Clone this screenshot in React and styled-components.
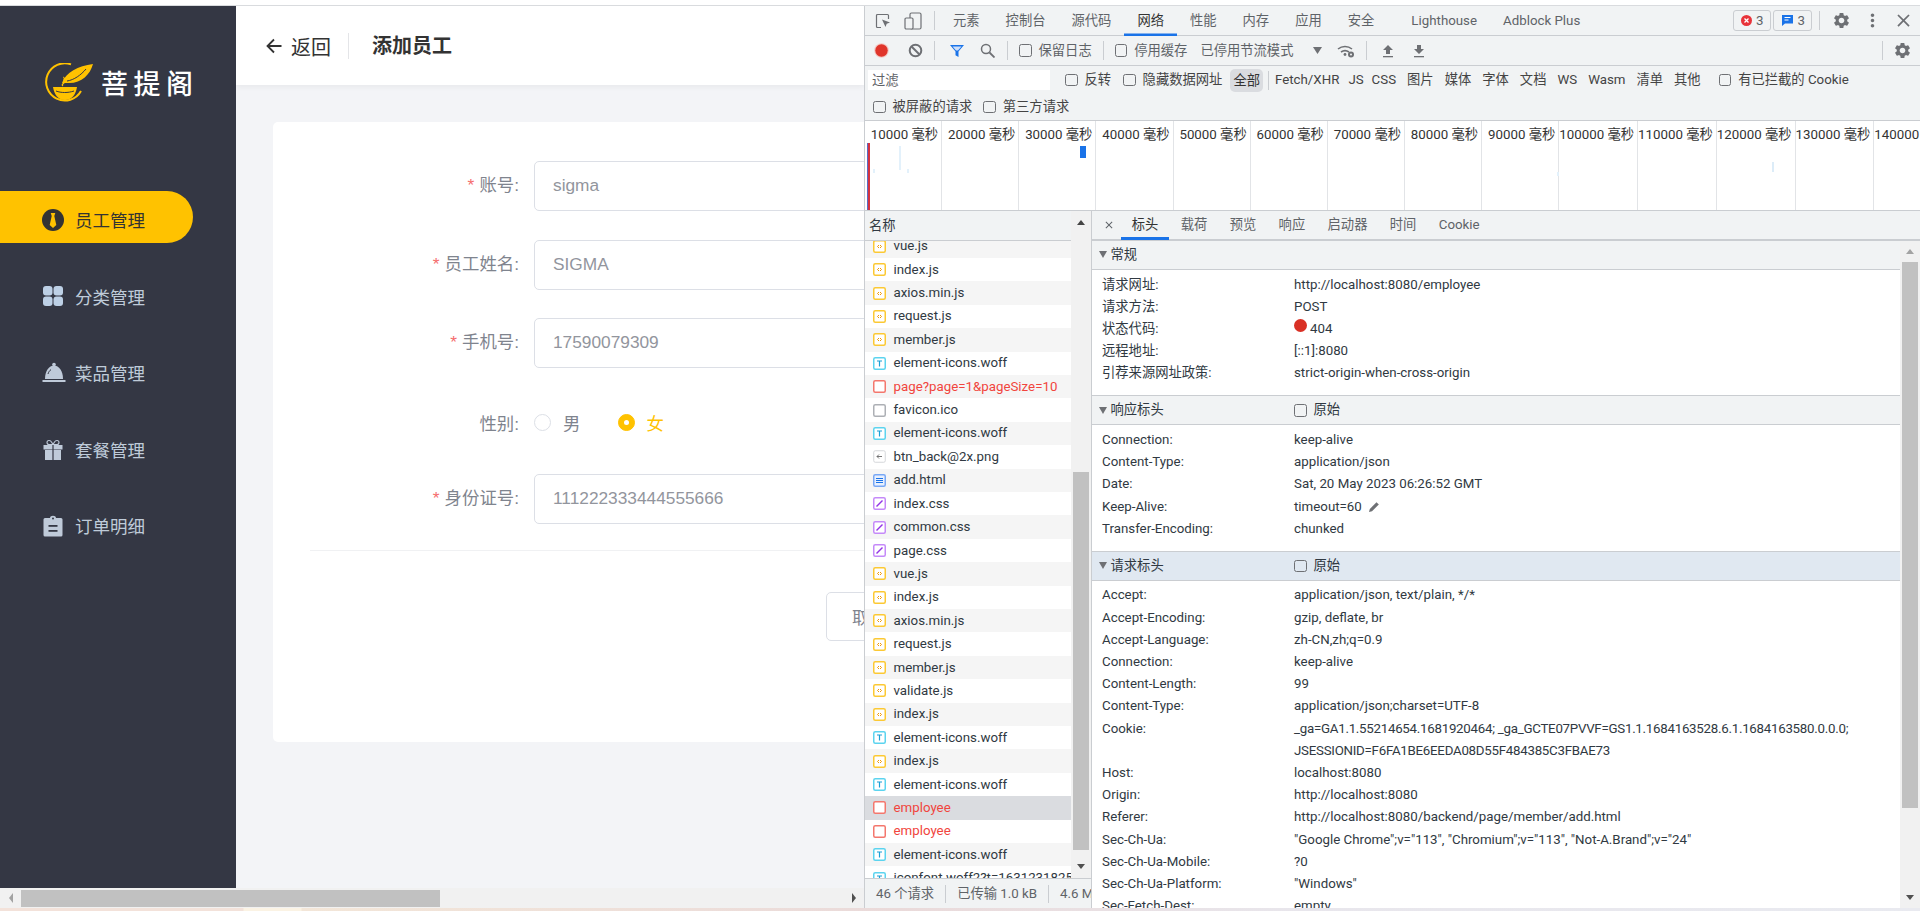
import React from "react";
import styled, { createGlobalStyle } from "styled-components";
import { MdSettings, MdMoreVert, MdClose } from "react-icons/md";

const UI = `Roboto, "Noto Sans CJK SC", sans-serif`;
const PAGE = `"Liberation Sans", "Noto Sans CJK SC", sans-serif`;

const Global = createGlobalStyle`
  html, body { margin: 0; padding: 0; height: 100%; overflow: hidden; background: #fff; }
  * { box-sizing: border-box; }
`;

const Screen = styled.div`display:flex;flex-direction:column;width:1920px;height:911px;overflow:hidden;background:#fff;`;
const TopStrip = styled.div`height:6px;flex:none;background:#fff;border-bottom:1px solid #d9dbde;`;
const Workspace = styled.div`display:flex;flex:none;height:902px;`;
const BottomStrip = styled.div`height:3px;flex:none;background:linear-gradient(90deg,#f3e2da 0,#f3e2da 243px,#fbf3e4 244px,#fbf3e4 301px,#f3e6d8 302px,#eadada 900px,#e8e6ec 1300px,#e9eaf0 100%);`;

/* ---- application page ---- */
const PagePane = styled.div`display:flex;flex-direction:column;flex:none;width:864px;`;
const AppArea = styled.div`display:flex;flex:1;min-height:0;overflow:hidden;`;
const Sidebar = styled.aside`flex:none;width:236px;background:#343744;font-family:${PAGE};`;
const Logo = styled.div`display:flex;align-items:center;margin:57px 0 88px 45px;height:40px;gap:8px;`;
const LogoText = styled.span`color:#fff;font:500 27px/40px "Noto Sans CJK SC",sans-serif;letter-spacing:5.5px;white-space:nowrap;`;
const NavItem = styled.div`
  display:flex;align-items:center;gap:11px;width:193px;height:52px;margin-bottom:24.5px;padding:6px 0 0 42px;
  border-radius:0 26px 26px 0;background:${p=>p.$active?"#ffc200":"transparent"};color:${p=>p.$active?"#333":"#bfcbd9"};
`;
const NavText = styled.span`font-size:17.5px;line-height:20px;padding-top:2px;white-space:nowrap;margin-left:${p=>p.$ml||0}px;`;
const NavIcon = styled.svg`width:${p=>p.$w||22}px;height:22px;flex:none;display:block;`;

const Main = styled.main`flex:1;min-width:0;display:flex;flex-direction:column;background:#f3f4f7;font-family:${PAGE};overflow:hidden;`;
const PageHeader = styled.header`flex:none;height:79px;display:flex;align-items:center;background:#fff;box-shadow:0 2px 6px rgba(0,0,0,.05);padding:1px 0 0 29px;`;
const BackLink = styled.span`display:flex;align-items:center;gap:8px;color:#333;font-size:20px;`;
const HeaderRule = styled.span`width:1px;height:26px;background:#e4e5e8;margin:0 23px 0 17px;`;
const PageTitle = styled.h1`margin:0;font-size:20px;line-height:26px;font-weight:700;color:#333;`;
const Content = styled.div`flex:1;padding:37px 0 0 37px;`;
const Card = styled.section`width:900px;height:620px;background:#fff;border-radius:5px;padding:39px 0 0 37px;`;
const Field = styled.div`display:flex;align-items:center;height:${p=>p.$h||50}px;margin:0 0 28.7px -37px;padding-top:${p=>p.$pt||0}px;`;
const FieldLabel = styled.label`flex:none;width:246px;text-align:right;font-size:17.4px;color:#7f848e;white-space:nowrap;padding-bottom:${p=>p.$pb??5}px;`;
const Star = styled.span`color:#f56c6c;margin-right:5px;`;
const TextInput = styled.div`flex:none;margin-left:15px;width:420px;height:50px;border:1.5px solid #dcdfe6;border-radius:5px;padding:0 18px 1px;display:flex;align-items:center;font-size:17.3px;color:#92959d;`;
const RadioGroup = styled.div`display:flex;align-items:center;margin-left:15px;`;
const RadioDot = styled.span`
  width:17px;height:17px;border-radius:50%;flex:none;position:relative;
  border:1px solid ${p=>p.$on?"#ffc200":"#dcdfe6"};background:${p=>p.$on?"#ffc200":"#fff"};
  &::after{content:"";position:absolute;left:5px;top:5px;width:5px;height:5px;border-radius:50%;background:${p=>p.$on?"#fff":"transparent"};}
`;
const RadioLabel = styled.span`font-size:17.4px;margin:0 38px 0 ${p=>p.$on?11:12}px;color:${p=>p.$on?"#ffc200":"#7f848e"};`;
const FormRule = styled.div`height:1px;background:#f0f1f3;margin-top:-2.5px;width:700px;`;
const Actions = styled.div`margin:41px 0 0 516px;`;
const CancelButton = styled.button`width:120px;height:49px;border:1.5px solid #dcdfe6;border-radius:5px;background:#fff;text-align:left;padding:0 0 0 25px;color:#7f848e;font:17.5px ${PAGE};`;

const HScroll = styled.div`flex:none;height:20px;display:flex;align-items:center;background:#f1f1f1;`;
const ScrollEnd = styled.span`flex:none;width:21px;height:20px;display:flex;align-items:center;justify-content:center;font-size:0;`;
const ArrowL = styled.span`width:0;height:0;border-top:5.5px solid transparent;border-bottom:5.5px solid transparent;border-right:4px solid #a3a3a3;`;
const ArrowR = styled.span`width:0;height:0;border-top:5.5px solid transparent;border-bottom:5.5px solid transparent;border-left:4px solid #505050;`;
const HThumb = styled.span`width:419px;height:17px;background:#c1c1c1;margin-right:auto;`;

/* ---- devtools ---- */
const Dev = styled.div`flex:1;min-width:0;display:flex;flex-direction:column;background:#f1f3f4;border-left:1px solid #cacdd1;font:13.3px/1.2 ${UI};color:#5f6368;overflow:hidden;`;
const ToolRow = styled.div`flex:none;height:${p=>p.$h||30}px;display:flex;align-items:center;white-space:nowrap;${p=>p.$line?"border-bottom:1px solid #cacdd1;":""}`;
const Slot = styled.span`display:flex;flex:none;align-items:center;margin-left:${p=>p.$ml||0}px;margin-right:${p=>p.$mr||0}px;`;
const Rule = styled.span`flex:none;width:1px;height:19px;background:#cacdd1;margin-left:${p=>p.$ml||0}px;`;
const PanelTab = styled.span`
  flex:none;height:30px;display:flex;align-items:center;padding:0 13px;margin-left:${p=>p.$ml||0}px;
  color:${p=>p.$on?"#333":"#5f6368"};box-shadow:${p=>p.$on?"inset 0 -2.5px 0 #1a73e8":"none"};
`;
const Chip = styled.span`flex:none;height:21px;display:flex;align-items:center;gap:4px;padding:0 6px 0 7px;border:1px solid #cacdd1;border-radius:3px;margin-left:${p=>p.$ml||0}px;color:#5f6368;`;
const Right = styled.span`margin-left:auto;display:flex;align-items:center;`;
const FilterBox = styled.span`flex:none;width:182px;height:20px;margin-left:3px;background:#fff;padding:0 4px;line-height:21px;color:#5f6368;`;
const Check = styled.input.attrs({type:"checkbox"})`
  appearance:none;flex:none;width:12.5px;height:12.5px;margin:0 7px 0 ${p=>p.$ml||0}px;border:1px solid #6e7074;border-radius:2.5px;background:transparent;
`;
const CheckText = styled.span`color:#444;`;
const TypePill = styled.span`flex:none;height:23px;line-height:23px;padding:0 3px;margin-left:${p=>p.$ml||0}px;background:${p=>p.$on?"#dadce0":"transparent"};border-radius:5px;color:#333;`;
const TypeList = styled.span`display:flex;flex:none;gap:11px;margin-left:6px;color:#444;`;
const TypeItem = styled.span`margin-right:${p=>p.$mr||0}px;`;

const Timeline = styled.div`position:relative;flex:none;height:91px;display:flex;background:#fff;border-top:1px solid #cacdd1;border-bottom:1px solid #cacdd1;overflow:hidden;`;
const TimeCell = styled.div`flex:0 0 77.15px;border-right:1px solid #e2e4e7;padding:6px 3px 0 0;text-align:right;font-size:13.3px;color:#333;white-space:nowrap;`;
const Mark = styled.span`position:absolute;left:${p=>p.$x}px;top:${p=>p.$y}px;width:${p=>p.$w}px;height:${p=>p.$h}px;background:${p=>p.$c};`;

const Lower = styled.div`flex:1;min-height:0;display:flex;`;
const ListPane = styled.div`flex:none;width:227px;display:flex;flex-direction:column;border-right:1px solid #cacdd1;`;
const ListBody = styled.div`flex:1;min-height:0;display:flex;`;
const ListCol = styled.div`flex:none;width:206px;display:flex;flex-direction:column;min-height:0;`;
const ListHead = styled.div`flex:none;height:30px;padding:0 4px;display:flex;align-items:center;color:#303942;border-bottom:1px solid #cacdd1;`;
const ListRows = styled.div`flex:1;min-height:0;overflow:hidden;`;
const ListInner = styled.div`margin-top:-6.5px;`;
const FileRow = styled.div`
  height:23.42px;display:flex;align-items:center;gap:7.5px;padding-left:8px;white-space:nowrap;overflow:hidden;
  background:${p=>p.$sel?"#dadce0":p.$odd?"#fff":"#f5f5f5"};color:${p=>p.$err?"#f1453d":"#303942"};
`;
const VScroll = styled.div`flex:1;min-width:0;background:#f1f1f1;display:flex;flex-direction:column;align-items:center;position:relative;`;
const VThumb = styled.span`position:absolute;left:2px;right:2px;top:${p=>p.$t}px;height:${p=>p.$h}px;background:#c1c1c1;`;
const TriUp = styled.span`position:absolute;left:50%;margin-left:-4px;top:${p=>p.$t}px;width:0;height:0;border-left:4.5px solid transparent;border-right:4.5px solid transparent;border-bottom:5px solid ${p=>p.$c||"#505050"};`;
const TriDown = styled.span`position:absolute;left:50%;margin-left:-4px;bottom:${p=>p.$b}px;width:0;height:0;border-left:4.5px solid transparent;border-right:4.5px solid transparent;border-top:5px solid ${p=>p.$c||"#505050"};`;
const ListFoot = styled.div`flex:none;height:30px;display:flex;align-items:center;padding-left:11px;border-top:1px solid #cacdd1;color:#5f6368;white-space:nowrap;overflow:hidden;`;
const FootRule = styled.span`flex:none;width:1px;height:18px;background:#cacdd1;margin:0 11px;`;

const DetailPane = styled.div`flex:1;min-width:0;display:flex;flex-direction:column;`;
const DetailTabs = styled.div`flex:none;height:30px;display:flex;align-items:center;padding-left:11px;border-bottom:2px solid #cacdd1;`;
const DetailClose = styled.span`display:flex;flex:none;margin-right:5.5px;color:#5f6368;`;
const DetailTab = styled.span`
  flex:none;height:29px;padding:0 11.2px;display:flex;align-items:center;
  color:${p=>p.$on?"#333":"#5f6368"};box-shadow:${p=>p.$on?"inset 0 -3px 0 #1a73e8":"none"};
`;
const DetailBody = styled.div`flex:1;min-height:0;display:flex;overflow:hidden;`;
const DetailScrollArea = styled.div`flex:none;width:808px;overflow:hidden;background:#fff;`;
const SectionHead = styled.div`
  height:${p=>p.$first?29:30}px;display:flex;align-items:center;color:#303942;background:${p=>p.$sel?"#e0e8f1":"#f1f3f4"};
  border-bottom:1px solid #cacdd1;${p=>p.$first?"":"border-top:1px solid #cacdd1;"}
`;
const SectionTitle = styled.span`flex:none;width:202px;display:flex;align-items:center;gap:3.5px;padding-left:7px;`;
const Caret = styled.span`width:0;height:0;border-left:4.5px solid transparent;border-right:4.5px solid transparent;border-top:7px solid #6e7074;`;
const Rows = styled.div`padding:3.5px 0 11px;`;
const Row = styled.div`display:flex;height:22.2px;align-items:center;padding-left:10px;white-space:nowrap;`;
const RowKey = styled.span`flex:none;width:192px;color:#303942;`;
const RowVal = styled.span`display:flex;align-items:center;color:#303942;letter-spacing:${p=>p.$tight?"-.26px":"0"};`;
const StatusDot = styled.span`width:13px;height:13px;border-radius:50%;background:#d93025;margin:-6px 3px 0 0;`;
const PencilIcon = styled.svg`display:block;width:12px;height:12px;margin-left:6px;`;

const Svg = ({w=16,h=16,vb,children,...r}) => <svg width={w} height={h} viewBox={vb||`0 0 ${w} ${h}`} style={{display:"block"}} {...r}>{children}</svg>;

const LogoMark = () => (
  <svg width="48" height="40" viewBox="0 0 48 40" style={{display:"block",flex:"none"}}>
    <path d="M26 1.4A18.6 18.6 0 1 0 36 28" fill="none" stroke="#ffc200" strokeWidth="2"/>
    <path d="M17 20C21 9 33 3 48 1c-3 11-12 20-26 19z" fill="#ffc200"/>
    <path d="M22 18c7-1 14-6 19-12" stroke="#343744" strokeWidth="1" fill="none"/>
    <path d="M8 24h24c-1 7-5 13-12 13S9 31 8 24z" fill="#ffc200"/>
    <path d="M18 23c-3-2 4-3 1-6 2-1-1-2 0-3" stroke="#ffc200" strokeWidth="1.3" fill="none"/>
    <path d="M11 28c5 2 12 2 18 0" stroke="#343744" strokeWidth="1" fill="none"/>
  </svg>
);
const TieIcon = () => (
  <NavIcon viewBox="0 0 22 22">
    <ellipse cx="11" cy="11" rx="11" ry="11" fill="#333"/>
    <path d="M8.7 4h4.6l-1 3 2 9L11 19l-3.300-3 2-9z" fill="#ffc200"/>
  </NavIcon>
);
const GridIcon = () => (
  <NavIcon viewBox="0 0 22 22" fill="#bdd0e6">
    <rect x="1" y="0" width="9.500" height="9.500" rx="3"/><rect x="11.500" y="0" width="9.500" height="9.500" rx="3"/>
    <rect x="1" y="10.500" width="9.500" height="9.500" rx="3"/><rect x="11.500" y="10.500" width="9.500" height="9.500" rx="3"/>
  </NavIcon>
);
const BellIcon = () => (
  <NavIcon $w={24} viewBox="0 0 24 22" fill="#bfcad9">
    <circle cx="12" cy="2.500" r="1.800"/>
    <path d="M3 17C3 9 7 3.500 12 3.500S21 9 21 17z"/>
    <rect x="0.500" y="18" width="23" height="2" />
    <path d="M6 12c.5-2 1.800-3.500 3-4.500" stroke="#343744" strokeWidth="1" fill="none"/>
  </NavIcon>
);
const GiftIcon = () => (
  <NavIcon viewBox="0 0 22 22" fill="#bfcad9">
    <path d="M7 1.500a2 2 0 0 0 0 4h4l-1.500-2.500C9 2 8 1.500 7 1.500zM15 1.500a2 2 0 0 1 0 4h-4l1.500-2.500c.5-1 1.500-1.500 2.500-1.500z" fill="none" stroke="#bfcad9" strokeWidth="1.100"/>
    <rect x="1.500" y="6" width="19" height="4.500"/><rect x="3" y="11" width="16" height="10"/>
    <rect x="10.400" y="6" width="1.200" height="15" fill="#343744"/>
  </NavIcon>
);
const ClipIcon = () => (
  <NavIcon viewBox="0 0 22 22">
    <path d="M3 3h5c0-3 6-3 6 0h5a1.500 1.500 0 0 1 1.500 1.500V20a1.500 1.500 0 0 1-1.500 1.500H3A1.500 1.500 0 0 1 1.500 20V4.500A1.500 1.500 0 0 1 3 3z" fill="#bfcad9"/>
    <rect x="6.500" y="10" width="9" height="1.800" fill="#343744"/><rect x="6.500" y="15" width="9" height="1.800" fill="#343744"/>
    <circle cx="11" cy="3.500" r="1" fill="#343744"/>
  </NavIcon>
);

const FileIcon = ({k}) => {
  const c = {js:"#fcc934",font:"#5cd4ef",err:"#f4776d",gray:"#adb0b5",doc:"#79a8f5",css:"#c58af9",img:"#d5d7da"}[k];
  return (
    <svg width="13" height="13" viewBox="0 0 13 13" style={{flex:"none",display:"block"}}>
      <rect x=".75" y=".75" width="11.500" height="11.500" rx="1.500" fill={k==="doc"?"#e8f0fe":"#fff"} stroke={c} strokeWidth={k==="img"?1:1.500}/>
      {k==="js" && <path d="M6 5 4.500 6.500 6 8M7 5l1.500 1.500L7 8" fill="none" stroke="#f29900" strokeWidth="1"/>}
      {k==="font" && <path d="M4 4h5M6.500 4v5.500" stroke="#1a9fd6" strokeWidth="1.200" fill="none"/>}
      {k==="doc" && <path d="M3 4.500h7M3 6.500h7M3 8.500h7" stroke="#1a73e8" strokeWidth="1"/>}
      {k==="css" && <path d="M3.500 9.500 9.500 3.500" stroke="#9334e6" strokeWidth="1.400"/>}
      {k==="img" && <path d="M9 6.500H4M6 4.500l-2 2 2 2" fill="none" stroke="#666" strokeWidth=".9"/>}
    </svg>
  );
};

const files = [
  ["vue.js","js"],["index.js","js"],["axios.min.js","js"],["request.js","js"],["member.js","js"],
  ["element-icons.woff","font"],["page?page=1&pageSize=10","err"],["favicon.ico","gray"],["element-icons.woff","font"],
  ["btn_back@2x.png","img"],["add.html","doc"],["index.css","css"],["common.css","css"],["page.css","css"],
  ["vue.js","js"],["index.js","js"],["axios.min.js","js"],["request.js","js"],["member.js","js"],["validate.js","js"],
  ["index.js","js"],["element-icons.woff","font"],["index.js","js"],["element-icons.woff","font"],
  ["employee","err",true],["employee","err"],["element-icons.woff","font"],["iconfont.woff2?t=1631231825","font"],
];
const general = [
  ["请求网址:","http://localhost:8080/employee"],["请求方法:","POST"],["状态代码:","404"],["远程地址:","[::1]:8080"],
  ["引荐来源网址政策:","strict-origin-when-cross-origin"],
];
const response = [
  ["Connection:","keep-alive"],["Content-Type:","application/json"],["Date:","Sat, 20 May 2023 06:26:52 GMT"],
  ["Keep-Alive:","timeout=60"],["Transfer-Encoding:","chunked"],
];
const request = [
  ["Accept:","application/json, text/plain, */*"],["Accept-Encoding:","gzip, deflate, br"],["Accept-Language:","zh-CN,zh;q=0.9"],
  ["Connection:","keep-alive"],["Content-Length:","99"],["Content-Type:","application/json;charset=UTF-8"],
  ["Cookie:","_ga=GA1.1.55214654.1681920464; _ga_GCTE07PVVF=GS1.1.1684163528.6.1.1684163580.0.0.0;",true],
  ["","JSESSIONID=F6FA1BE6EEDA08D55F484385C3FBAE73",true],["Host:","localhost:8080"],["Origin:","http://localhost:8080"],
  ["Referer:","http://localhost:8080/backend/page/member/add.html"],
  ["Sec-Ch-Ua:",'"Google Chrome";v="113", "Chromium";v="113", "Not-A.Brand";v="24"'],
  ["Sec-Ch-Ua-Mobile:","?0"],["Sec-Ch-Ua-Platform:",'"Windows"'],["Sec-Fetch-Dest:","empty"],
];
const times = [10000,20000,30000,40000,50000,60000,70000,80000,90000,100000,110000,120000,130000,140000];

const HeaderRows = ({items}) => (
  <Rows>
    {items.map(([k,v,tight],i)=>(
      <Row key={i}>
        <RowKey>{k}</RowKey>
        <RowVal $tight={tight}>
          {v==="404" && <StatusDot/>}
          {v}
          {k==="Keep-Alive:" && (
            <PencilIcon viewBox="0 0 12 12">
              <path d="M1 11l.8-3L8.500 1.200l2.300 2.300L4 10.200z" fill="#6e7074"/>
            </PencilIcon>
          )}
        </RowVal>
      </Row>
    ))}
  </Rows>
);

export default function App(){
  return (
    <Screen>
      <Global/>
      <TopStrip/>
      <Workspace>
        <PagePane>
          <AppArea>
            <Sidebar>
              <Logo><LogoMark/><LogoText>菩提阁</LogoText></Logo>
              <nav>
                <NavItem $active><TieIcon/><NavText>员工管理</NavText></NavItem>
                <NavItem><GridIcon/><NavText>分类管理</NavText></NavItem>
                <NavItem><BellIcon/><NavText $ml={-2}>菜品管理</NavText></NavItem>
                <NavItem><GiftIcon/><NavText>套餐管理</NavText></NavItem>
                <NavItem><ClipIcon/><NavText>订单明细</NavText></NavItem>
              </nav>
            </Sidebar>
            <Main>
              <PageHeader>
                <BackLink>
                  <Svg w={18} h={18}><path d="M16.500 9H2.500M9 2.500 2.500 9 9 15.500" fill="none" stroke="#333" strokeWidth="1.800"/></Svg>
                  返回
                </BackLink>
                <HeaderRule/>
                <PageTitle>添加员工</PageTitle>
              </PageHeader>
              <Content>
                <Card>
                  <Field><FieldLabel><Star>*</Star>账号:</FieldLabel><TextInput>sigma</TextInput></Field>
                  <Field><FieldLabel><Star>*</Star>员工姓名:</FieldLabel><TextInput>SIGMA</TextInput></Field>
                  <Field><FieldLabel><Star>*</Star>手机号:</FieldLabel><TextInput>17590079309</TextInput></Field>
                  <Field $h={48} $pt={2}>
                    <FieldLabel $pb={0}>性别:</FieldLabel>
                    <RadioGroup>
                      <RadioDot/><RadioLabel>男</RadioLabel>
                      <RadioDot $on/><RadioLabel $on>女</RadioLabel>
                    </RadioGroup>
                  </Field>
                  <Field><FieldLabel><Star>*</Star>身份证号:</FieldLabel><TextInput>111222333444555666</TextInput></Field>
                  <FormRule/>
                  <Actions><CancelButton>取消</CancelButton></Actions>
                </Card>
              </Content>
            </Main>
          </AppArea>
          <HScroll>
            <ScrollEnd><ArrowL/></ScrollEnd>
            <HThumb/>
            <ScrollEnd><ArrowR/></ScrollEnd>
          </HScroll>
        </PagePane>

        <Dev>
          <ToolRow $line>
            <Slot $ml={10}>
              <Svg w={16} h={16}>
                <path d="M6 14.500H2.500a1 1 0 0 1-1-1V2.500a1 1 0 0 1 1-1h10a1 1 0 0 1 1 1V6" fill="none" stroke="#6e7074" strokeWidth="1.200"/>
                <path d="M7 6.500l8 3-3.300 1.200L10.500 14z" fill="#6e7074"/>
              </Svg>
            </Slot>
            <Slot $ml={13}>
              <Svg w={18} h={18}>
                <rect x="6" y="1" width="11" height="16" rx="1.500" fill="none" stroke="#6e7074" strokeWidth="1.200"/>
                <rect x="1" y="6" width="8" height="11" rx="1.200" fill="#f1f3f4" stroke="#6e7074" strokeWidth="1.200"/>
              </Svg>
            </Slot>
            <Rule $ml={12}/>
            <PanelTab $ml={5}>元素</PanelTab>
            <PanelTab>控制台</PanelTab>
            <PanelTab>源代码</PanelTab>
            <PanelTab $on>网络</PanelTab>
            <PanelTab>性能</PanelTab>
            <PanelTab>内存</PanelTab>
            <PanelTab>应用</PanelTab>
            <PanelTab>安全</PanelTab>
            <PanelTab $ml={11}>Lighthouse</PanelTab>
            <PanelTab>Adblock Plus</PanelTab>
            <Right>
              <Chip>
                <Svg w={11} h={11}><circle cx="5.500" cy="5.500" r="5.500" fill="#e8333a"/><path d="M3.500 3.500l4 4M7.500 3.500l-4 4" stroke="#fff" strokeWidth="1.300"/></Svg>
                3
              </Chip>
              <Chip $ml={2}>
                <Svg w={13} h={13}><path d="M1 1h11v8.500H4L1 12z" fill="#1a73e8"/><path d="M3.500 3.500h6M3.500 6h4" stroke="#fff" strokeWidth="1"/></Svg>
                3
              </Chip>
              <Rule $ml={7}/>
              <Slot $ml={12}><MdSettings size={19} color="#6e7074"/></Slot>
              <Slot $ml={11}><MdMoreVert size={21} color="#6e7074"/></Slot>
              <Slot $ml={10} $mr={6}><MdClose size={21} color="#6e7074"/></Slot>
            </Right>
          </ToolRow>

          <ToolRow $line>
            <Slot $ml={9}>
              <Svg w={15} h={15}><circle cx="7.500" cy="7.500" r="7.300" fill="#f3c9c5"/><circle cx="7.500" cy="7.500" r="6.200" fill="#e0352b"/></Svg>
            </Slot>
            <Slot $ml={19}>
              <Svg w={15} h={15}><circle cx="7.500" cy="7.500" r="5.800" fill="none" stroke="#6e7074" strokeWidth="2"/><path d="M3.500 3.500l8 8" stroke="#6e7074" strokeWidth="2"/></Svg>
            </Slot>
            <Rule $ml={11}/>
            <Slot $ml={14}>
              <Svg w={16} h={14}><path d="M1 1h14L9.500 7.500V13l-3-1.800V7.500z" fill="#1a73e8"/><path d="M3.500 2.500h9L9 6.500H7z" fill="#cfe0fa"/></Svg>
            </Slot>
            <Slot $ml={15}>
              <Svg w={15} h={15}><circle cx="6" cy="6" r="4.500" fill="none" stroke="#6e7074" strokeWidth="1.500"/><path d="M9.500 9.500l5 5" stroke="#6e7074" strokeWidth="1.800"/></Svg>
            </Slot>
            <Rule $ml={12}/>
            <Check $ml={11}/>保留日志
            <Rule $ml={11}/>
            <Check $ml={11}/>停用缓存
            <Slot $ml={13}>已停用节流模式</Slot>
            <Slot $ml={20}><Svg w={9} h={7}><path d="M0 0h9L4.500 7z" fill="#6e7074"/></Svg></Slot>
            <Slot $ml={15}>
              <Svg w={18} h={14}>
                <path d="M1 5a11 11 0 0 1 14 0M4 8a7 7 0 0 1 8 0" fill="none" stroke="#6e7074" strokeWidth="1.600"/>
                <circle cx="8" cy="10.500" r="1.400" fill="#6e7074"/><circle cx="14" cy="10.500" r="3" fill="#6e7074"/><circle cx="14" cy="10.500" r="1" fill="#f1f3f4"/>
              </Svg>
            </Slot>
            <Rule $ml={11}/>
            <Slot $ml={15}>
              <Svg w={12} h={14}><path d="M6 1l5 5H8v4H4V6H1z" fill="#6e7074"/><rect x="1" y="12" width="10" height="1.300" fill="#6e7074"/></Svg>
            </Slot>
            <Slot $ml={19}>
              <Svg w={12} h={14}><path d="M6 10L1 5h3V1h4v4h3z" fill="#6e7074"/><rect x="1" y="12" width="10" height="1.300" fill="#6e7074"/></Svg>
            </Slot>
            <Right>
              <Rule/>
              <Slot $ml={10} $mr={8}><MdSettings size={19} color="#6e7074"/></Slot>
            </Right>
          </ToolRow>

          <ToolRow $h={28}>
            <FilterBox>过滤</FilterBox>
            <Check $ml={15}/><CheckText>反转</CheckText>
            <Check $ml={12}/><CheckText>隐藏数据网址</CheckText>
            <TypePill $ml={8} $on>全部</TypePill>
            <Rule $ml={5}/>
            <TypeList>
              <TypeItem $mr={-2}>Fetch/XHR</TypeItem><TypeItem $mr={-3}>JS</TypeItem><TypeItem>CSS</TypeItem><TypeItem>图片</TypeItem><TypeItem>媒体</TypeItem><TypeItem>字体</TypeItem><TypeItem>文档</TypeItem><TypeItem>WS</TypeItem><TypeItem>Wasm</TypeItem><TypeItem>清单</TypeItem><TypeItem>其他</TypeItem>
            </TypeList>
            <Check $ml={18}/><CheckText>有已拦截的 Cookie</CheckText>
          </ToolRow>
          <ToolRow $h={26}>
            <Check $ml={8}/><CheckText>被屏蔽的请求</CheckText>
            <Check $ml={11}/><CheckText>第三方请求</CheckText>
          </ToolRow>

          <Timeline>
            {times.map(t=><TimeCell key={t}>{t} 毫秒</TimeCell>)}
            <Mark $x={1.5} $y={22} $w={1} $h={67} $c="#5b6cc4"/>
            <Mark $x={2.5} $y={22} $w={2} $h={67} $c="#d4323f"/>
            <Mark $x={34} $y={25} $w={2} $h={24} $c="#e3f1fb"/>
            <Mark $x={8} $y={48} $w={2} $h={4} $c="#e3f1fb"/>
            <Mark $x={42} $y={48} $w={2} $h={4} $c="#e3f1fb"/>
            <Mark $x={215} $y={25} $w={6} $h={12} $c="#1a73e8"/>
            <Mark $x={692} $y={51} $w={2} $h={4} $c="#e3f1fb"/>
            <Mark $x={907} $y={41} $w={2} $h={10} $c="#dcecf8"/>
          </Timeline>

          <Lower>
            <ListPane>
              <ListBody>
                <ListCol>
                  <ListHead>名称</ListHead>
                  <ListRows>
                    <ListInner>
                      {files.map(([n,k,sel],i)=>(
                        <FileRow key={i} $odd={i%2===1} $sel={sel} $err={k==="err"}><FileIcon k={k}/>{n}</FileRow>
                      ))}
                    </ListInner>
                  </ListRows>
                </ListCol>
                <VScroll>
                  <TriUp $t={9} $c="#444"/>
                  <VThumb $t={261} $h={378}/>
                  <TriDown $b={9}/>
                </VScroll>
              </ListBody>
              <ListFoot>
                46 个请求<FootRule/>已传输 1.0 kB<FootRule/>4.6 MB
              </ListFoot>
            </ListPane>

            <DetailPane>
              <DetailTabs>
                <DetailClose><MdClose size={12}/></DetailClose>
                <DetailTab $on>标头</DetailTab>
                <DetailTab>载荷</DetailTab>
                <DetailTab>预览</DetailTab>
                <DetailTab>响应</DetailTab>
                <DetailTab>启动器</DetailTab>
                <DetailTab>时间</DetailTab>
                <DetailTab>Cookie</DetailTab>
              </DetailTabs>
              <DetailBody>
                <DetailScrollArea>
                  <SectionHead $first><SectionTitle><Caret/>常规</SectionTitle></SectionHead>
                  <HeaderRows items={general}/>
                  <SectionHead><SectionTitle><Caret/>响应标头</SectionTitle><Check/>原始</SectionHead>
                  <HeaderRows items={response}/>
                  <SectionHead $sel><SectionTitle><Caret/>请求标头</SectionTitle><Check/>原始</SectionHead>
                  <HeaderRows items={request}/>
                </DetailScrollArea>
                <VScroll>
                  <TriUp $t={8} $c="#a3a3a3"/>
                  <VThumb $t={21} $h={546}/>
                  <TriDown $b={8}/>
                </VScroll>
              </DetailBody>
            </DetailPane>
          </Lower>
        </Dev>
      </Workspace>
      <BottomStrip/>
    </Screen>
  );
}
